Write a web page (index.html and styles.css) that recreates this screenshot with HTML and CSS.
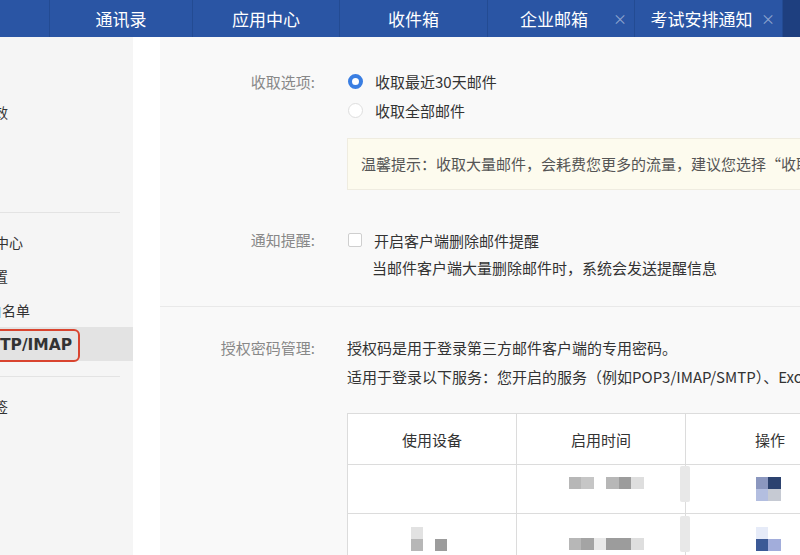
FILE: index.html
```html
<!DOCTYPE html>
<html lang="zh-CN">
<head>
<meta charset="utf-8">
<title>客户端设置</title>
<link rel="stylesheet" href="styles.css">
</head>
<body>
<div class="page">
  <div class="topbar">
    <div class="tab tab-first"></div>
    <div class="tab tab-w143"><span class="tab-label">通讯录</span></div>
    <div class="tab"><span class="tab-label">应用中心</span></div>
    <div class="tab tab-w148"><span class="tab-label">收件箱</span></div>
    <div class="tab tab-closable"><span class="tab-label">企业邮箱</span><span class="tab-close">×</span></div>
    <div class="tab tab-w148 tab-closable"><span class="tab-label">考试安排通知</span><span class="tab-close">×</span></div>
    <div class="topbar-rest"></div>
  </div>
  <div class="body">
    <div class="sidebar">
      <div class="sb-group sb-group-1">
        <div class="sb-item"></div>
        <div class="sb-item"><span class="cut-6">效</span></div>
        <div class="sb-item"></div>
        <div class="sb-item"></div>
      </div>
      <div class="sb-sep"></div>
      <div class="sb-group">
        <div class="sb-item"><span class="cut-5">安全中心</span></div>
        <div class="sb-item"><span class="cut-6">置</span></div>
        <div class="sb-item"><span class="cut-10">白名单</span></div>
        <div class="sb-item sb-active"><span class="sb-mark">TP/IMAP</span></div>
      </div>
      <div class="sb-sep"></div>
      <div class="sb-group">
        <div class="sb-item"><span class="cut-6">签</span></div>
      </div>
    </div>
    <div class="gutter"></div>
    <div class="main">
      <div class="section section-1">
        <div class="field">
          <div class="label">收取选项:</div>
          <div class="content">
            <div class="opt"><span class="radio radio-on"></span><span>收取最近30天邮件</span></div>
            <div class="opt"><span class="radio"></span><span>收取全部邮件</span></div>
            <div class="tip">温馨提示：收取大量邮件，会耗费您更多的流量，建议您选择“收取最近30天邮件”</div>
          </div>
        </div>
      </div>
      <div class="section section-2">
        <div class="field">
          <div class="label">通知提醒:</div>
          <div class="content">
            <div class="opt opt-28"><span class="checkbox"></span><span>开启客户端删除邮件提醒</span></div>
            <div class="sub">当邮件客户端大量删除邮件时，系统会发送提醒信息</div>
          </div>
        </div>
      </div>
      <div class="section section-3">
        <div class="field">
          <div class="label">授权密码管理:</div>
          <div class="content">
            <div class="line">授权码是用于登录第三方邮件客户端的专用密码。</div>
            <div class="line">适用于登录以下服务：您开启的服务（例如POP3/IMAP/SMTP）、Exchange服务和CardDAV/CalDAV服务。</div>
            <div class="table">
              <div class="th">使用设备</div>
              <div class="th">启用时间</div>
              <div class="th">操作</div>
              <div class="td"></div>
              <div class="td">
                <div class="mosaic">
                  <span class="px g1"></span><span class="px g2"></span><span class="px blank"></span><span class="px g1"></span><span class="px g3"></span><span class="px g4"></span>
                </div>
              </div>
              <div class="td td-op">
                <span class="smear"></span>
                <div class="mosaic-grid">
                  <span class="px b1"></span><span class="px b2"></span>
                  <span class="px b3"></span><span class="px b4"></span>
                </div>
              </div>
              <div class="td">
                <div class="mosaic-grid mosaic-gap">
                  <span class="px g5"></span><span class="px blank"></span><span class="px blank"></span>
                  <span class="px g1"></span><span class="px blank"></span><span class="px g3"></span>
                </div>
              </div>
              <div class="td td-low">
                <div class="mosaic">
                  <span class="px g1"></span><span class="px g2d"></span><span class="px g6"></span><span class="px g3"></span><span class="px g3"></span><span class="px g4"></span>
                </div>
              </div>
              <div class="td td-op td-low">
                <span class="smear"></span>
                <div class="mosaic-grid">
                  <span class="px b5"></span><span class="px blank"></span>
                  <span class="px b6"></span><span class="px b7"></span>
                </div>
              </div>
            </div>
          </div>
        </div>
      </div>
    </div>
  </div>
</div>
</body>
</html>
```

FILE: styles.css
```css
* { box-sizing: border-box; }
html, body { margin: 0; padding: 0; }
body {
  width: 800px;
  height: 555px;
  overflow: hidden;
  font-family: "Noto Sans CJK SC", "Noto Sans", sans-serif;
  font-size: 15px;
  color: #333;
  background: #f8f8f8;
}
.page { width: 800px; height: 555px; display: flex; flex-direction: column; overflow: hidden; }

/* top bar */
.topbar {
  height: 37px;
  flex: none;
  display: flex;
  background: #2a55a4;
  color: #fff;
}
.tab {
  width: 147px;
  flex: none;
  display: flex;
  align-items: center;
  border-right: 1px solid #234b93;
  font-size: 17px;
  line-height: 37px;
}
.tab-first { width: 50px; }
.tab-w143 { width: 143px; }
.tab-w148 { width: 148px; }
.tab-label { flex: 1; text-align: center; white-space: nowrap; }
.tab-closable { padding-left: 14px; }
.tab-close {
  width: 28px;
  text-align: center;
  font-size: 14px;
  color: #8ea4cf;
}
.topbar-rest { flex: 1; background: #1e3f7f; }

/* body */
.body { flex: 1; display: flex; min-height: 0; }
.sidebar {
  width: 133px;
  flex: none;
  background: #f5f5f5;
  overflow: hidden;
}
.sb-group { padding: 12px 0 15px; }
.sb-group-1 { padding: 24px 0 15px; }
.sb-item {
  height: 34px;
  line-height: 34px;
  font-size: 14px;
  color: #333;
  white-space: nowrap;
  display: flex;
  align-items: center;
}
.cut-5 { margin-left: -33px; }
.cut-6 { margin-left: -6px; }
.cut-10 { margin-left: -12px; }
.sb-sep { height: 1px; width: 120px; background: #e3e3e3; }
.sb-active { background: #e3e3e3; }
.sb-mark {
  display: inline-block;
  margin-left: -10px;
  margin-top: 3px;
  height: 33px;
  line-height: 29px;
  padding: 0 6px 0 8px;
  border: 2px solid #d9442f;
  border-radius: 6px;
  font-family: "DejaVu Sans", sans-serif;
  font-weight: bold;
  font-size: 15.5px;
  color: #333;
}
.gutter { width: 27px; flex: none; background: #fff; }

/* main */
.main {
  flex: 1;
  min-width: 0;
  overflow: hidden;
  background: #f9f9f9;
  white-space: nowrap;
}
.section { border-bottom: 1px solid #e9e9e9; }
.section-1 { padding: 30px 0 36px; border-bottom: 0; }
.section-2 { padding: 0 0 24px; }
.section-3 { padding: 26px 0 0; border-bottom: 0; }
.field { display: flex; gap: 32px; }
.label {
  width: 155px;
  flex: none;
  text-align: right;
  color: #888;
  line-height: 29px;
}
.section-2 .label { line-height: 28px; }
.content { flex: 1; min-width: 0; }
.opt { display: flex; align-items: center; height: 29px; gap: 12px; }
.opt-28 { height: 28px; }
.radio {
  width: 15px;
  height: 15px;
  border-radius: 50%;
  border: 1px solid #dedede;
  background: #fff;
  flex: none;
  margin-left: 1px;
}
.radio-on {
  border: 4px solid #3a7ee2;
  background: #fff;
}
.checkbox {
  width: 14px;
  height: 14px;
  border: 1px solid #cfcfcf;
  border-radius: 2px;
  background: #fff;
  flex: none;
  margin-left: 1px;
}
.tip {
  margin-top: 13px;
  height: 52px;
  line-height: 50px;
  padding-left: 13px;
  background: #fdfbee;
  border: 1px solid #efece0;
  border-right: 0;
  color: #555;
}
.sub { line-height: 28px; padding-left: 25px; color: #333; }
.line { line-height: 29px; }

/* table */
.table {
  margin-top: 22px;
  display: grid;
  grid-template-columns: 169px 169px 169px;
  grid-auto-rows: 50px;
  width: 507px;
  border-top: 1px solid #dcdcdc;
  border-left: 1px solid #dcdcdc;
  background: #fff;
}
.th, .td {
  border-right: 1px solid #dcdcdc;
  border-bottom: 1px solid #dcdcdc;
  display: flex;
  align-items: center;
  justify-content: center;
  position: relative;
}
.th { height: 51px; color: #333; }
.mosaic { display: flex; padding-left: 10px; margin-bottom: 12px; }
.td-low .mosaic { margin-bottom: 0; margin-top: 10px; }
.mosaic-grid {
  display: grid;
  grid-template-columns: 12px 13px;
  grid-auto-rows: 12px;
  margin-left: -4px;
}
.mosaic-gap { grid-template-columns: 12px 12px 12px; margin-left: -6px; margin-top: 0; }
.td-low .mosaic-grid { margin-top: 0; }
.px { display: block; width: 12.5px; height: 12px; }
.mosaic-grid .px { width: auto; }
.blank { background: transparent; }
.g1 { background: #b7b7b7; }
.g2 { background: #c6c6c6; }
.g2d { background: #a4a4a4; }
.g3 { background: #9c9c9c; }
.g4 { background: #dedede; }
.g5 { background: #e2e2e2; }
.g6 { background: #e9e9e9; }
.b1 { background: #8b97bf; }
.b2 { background: #2c426f; }
.b3 { background: #b3bee0; }
.b4 { background: #c6cad3; }
.b5 { background: #e6ebf8; }
.b6 { background: #3b5996; }
.b7 { background: #a2addb; }
.smear {
  position: absolute;
  left: -6px;
  top: 2px;
  width: 10px;
  height: 36px;
  background: #e8e8e8;
  border-radius: 2px;
}
```
